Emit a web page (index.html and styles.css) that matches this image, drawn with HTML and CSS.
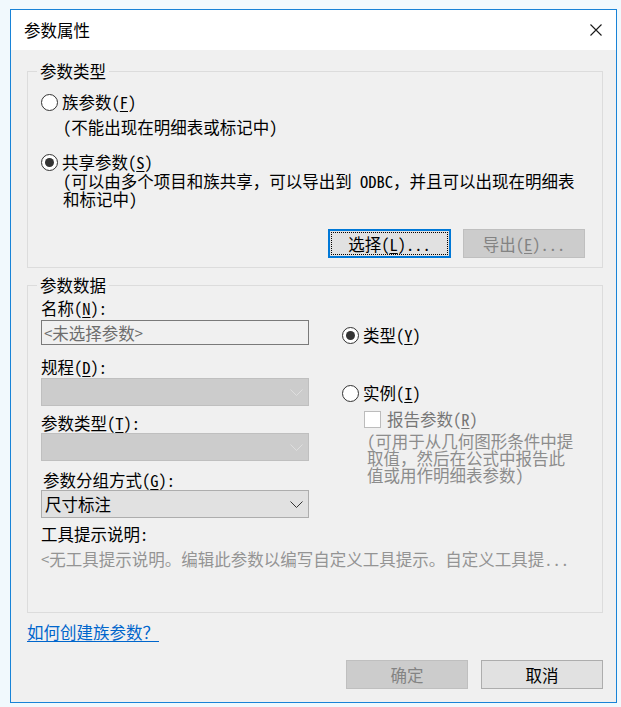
FILE: index.html
```html
<!DOCTYPE html>
<html lang="zh-CN">
<head>
<meta charset="utf-8">
<title>参数属性</title>
<link rel="stylesheet" href="styles.css">
</head>
<body>
<div class="win">
  <div class="titlebar">
    <span class="title">参数属性</span>
    <svg class="close" width="12" height="12" viewBox="0 0 12 12"><path d="M0.5 0.5L11.5 11.5M11.5 0.5L0.5 11.5" stroke="#1a1a1a" stroke-width="1.1" fill="none"/></svg>
  </div>
  <div class="content">
    <fieldset class="group g1">
      <legend>参数类型</legend>
      <div class="g1-inner">
        <div class="radio-row r1"><span class="radio"></span><span>族参数(<u>F</u>)</span></div>
        <div class="note n1">(不能出现在明细表或标记中)</div>
        <div class="radio-row r2"><span class="radio checked"></span><span>共享参数(<u>S</u>)</span></div>
        <div class="note n2">(可以由多个项目和族共享，可以导出到 ODBC，并且可以出现在明细表<br>和标记中)</div>
        <div class="btn-row">
          <button class="btn focus">选择(<u>L</u>)...</button>
          <button class="btn disabled">导出(<u>E</u>)...</button>
        </div>
      </div>
    </fieldset>
    <fieldset class="group g2">
      <legend>参数数据</legend>
      <div class="g2-inner">
        <div class="cols">
          <div class="left">
            <div class="lbl l-name">名称(<u>N</u>):</div>
            <div class="input">&lt;未选择参数&gt;</div>
            <div class="lbl l-disc">规程(<u>D</u>):</div>
            <div class="select disabled"><span></span><svg class="chev" width="13" height="7" viewBox="0 0 13 7"><path d="M0.5 0.5L6.5 6.5L12.5 0.5" stroke="#dedede" fill="none"/></svg></div>
            <div class="lbl l-type">参数类型(<u>T</u>):</div>
            <div class="select disabled"><span></span><svg class="chev" width="13" height="7" viewBox="0 0 13 7"><path d="M0.5 0.5L6.5 6.5L12.5 0.5" stroke="#dedede" fill="none"/></svg></div>
            <div class="lbl l-group">参数分组方式(<u>G</u>):</div>
            <div class="select enabled"><span>尺寸标注</span><svg class="chev" width="13" height="7" viewBox="0 0 13 7"><path d="M0.5 0.5L6.5 6.5L12.5 0.5" stroke="#333" fill="none"/></svg></div>
          </div>
          <div class="right">
            <div class="radio-row rt"><span class="radio checked"></span><span>类型(<u>Y</u>)</span></div>
            <div class="radio-row ri"><span class="radio"></span><span>实例(<u>I</u>)</span></div>
            <div class="check-row"><span class="checkbox"></span><span>报告参数(<u>R</u>)</span></div>
            <div class="rnote">(可用于从几何图形条件中提<br>取值，然后在公式中报告此<br>值或用作明细表参数)</div>
          </div>
        </div>
        <div class="lbl l-tip">工具提示说明:</div>
        <div class="tip">&lt;无工具提示说明。编辑此参数以编写自定义工具提示。自定义工具提...</div>
      </div>
    </fieldset>
    <a class="link" href="#">如何创建族参数？</a>
    <div class="footer">
      <button class="btn disabled">确定</button>
      <button class="btn">取消</button>
    </div>
  </div>
</div>
</body>
</html>
```

FILE: styles.css
```css
* { box-sizing: border-box; }
html, body { margin: 0; padding: 0; }
body {
  background: #f1f9fd;
  font-family: "Noto Sans Mono CJK SC", "Noto Sans CJK SC", sans-serif;
  font-size: 16.5px;
  line-height: 18px;
  color: #000;
}
u { text-decoration: underline; text-underline-offset: 2px; }

.win {
  margin: 9px 0 0 10px;
  width: 607px;
  height: 694px;
  border: 1px solid #1883d7;
  background: #f0f0f0;
  display: flex;
  flex-direction: column;
}
.titlebar {
  flex: none;
  height: 40px;
  background: #fff;
  display: flex;
  align-items: center;
  justify-content: space-between;
  padding: 0 14px 0 13px;
}
.close { display: block; }

.content {
  flex: 1;
  padding: 0 13px 0 16px;
  display: flex;
  flex-direction: column;
}

.group {
  margin: 0;
  padding: 0;
  border: 1px solid #dcdcdc;
  min-width: 0;
}
.group legend {
  margin-left: 9px;
  padding: 0 3px;
  line-height: 17px;
}
.g1 { margin-top: 13px; }
.g1-inner { padding: 13px 17px 9px 13px; }

.radio-row { display: flex; align-items: center; height: 18px; }
.radio {
  width: 17px; height: 17px;
  border: 1px solid #333;
  border-radius: 50%;
  background: #fff;
  margin-right: 4px;
  display: flex; align-items: center; justify-content: center;
  flex: none;
}
.radio.checked::before {
  content: "";
  width: 9px; height: 9px;
  border-radius: 50%;
  background: #333;
}
.note { margin-left: 22px; }
.n1 { margin-top: 7px; }
.r2 { margin-top: 17px; }
.n2 { margin-top: 1px; }

.btn-row {
  margin-top: 21px;
  display: flex;
  justify-content: flex-end;
  gap: 12px;
}
.btn {
  font: inherit;
  line-height: 18px;
  height: 29px;
  width: 122px;
  padding: 0;
  border: 1px solid #adadad;
  background: #e1e1e1;
  color: #000;
  display: flex;
  align-items: center;
  justify-content: center;
  position: relative;
}
.btn.focus { width: 123px; border: 2px solid #0078d7; }
.btn.focus::after {
  content: "";
  position: absolute;
  inset: 1px;
  border: 1px dotted #000;
}
.btn.disabled { background: #cccccc; border-color: #bfbfbf; color: #838383; }

.g2 { margin-top: 9px; }
.g2-inner { padding: 0 13px 44px 13px; }
.cols { display: flex; gap: 33px; }
.left { width: 268px; flex: none; }
.lbl { height: 18px; }
.l-name { margin-top: 5px; }
.input {
  margin-top: 3px;
  height: 25px;
  border: 1px solid #7a7a7a;
  background: #f0f0f0;
  color: #6d6d6d;
  padding-left: 2px;
  display: flex; align-items: center;
}
.l-disc { margin-top: 13px; }
.select {
  margin-top: 2px;
  height: 28px;
  border: 1px solid #bfbfbf;
  background: #cccccc;
  display: flex; align-items: center;
  padding: 0 5px 0 3px;
}
.select .chev { margin-left: auto; display: block; }
.select.enabled { background: #e1e1e1; border-color: #adadad; }
.l-type { margin-top: 8px; }
.select.disabled + .lbl + .select { margin-top: 1px; }
.l-group { margin-top: 10px; padding-left: 2px; }

.right { padding-top: 32px; }
.ri { margin-top: 40px; }
.check-row {
  margin-top: 8px;
  margin-left: 22px;
  display: flex; align-items: center;
  height: 18px;
  color: #777;
}
.checkbox {
  width: 17px; height: 17px;
  border: 1px solid #bcbcbc;
  background: #fff;
  margin-right: 6px;
  flex: none;
}
.rnote {
  margin-top: 5px;
  margin-left: 25px;
  line-height: 17px;
  color: #8c8c8c;
}

.l-tip { margin-top: 7px; }
.tip { margin-top: 7px; color: #949494; white-space: nowrap; }

.link {
  margin-top: 10px;
  align-self: flex-start;
  color: #0066cc;
  text-decoration: underline;
  text-underline-offset: 2px;
}
.footer {
  margin-top: 19px;
  display: flex;
  justify-content: flex-end;
  gap: 13px;
}
```
